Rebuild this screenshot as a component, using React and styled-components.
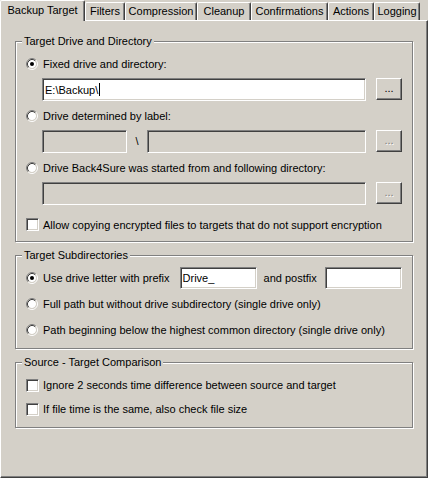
import styled, { createGlobalStyle } from 'styled-components'

const GlobalStyle = createGlobalStyle`
  html, body {
    margin: 0;
    padding: 0;
    background: #d4d0c8;
  }
  body {
    font-family: "Liberation Sans", Arial, sans-serif;
    font-size: 11px;
    color: #000;
  }
`

const Dialog = styled.div`
  width: 428px;
  height: 478px;
  display: flex;
  flex-direction: column;
  background: #d4d0c8;
`

const TabStrip = styled.div`
  display: flex;
  align-items: flex-end;
  height: 20px;
`

const Tab = styled.div`
  box-sizing: border-box;
  position: relative;
  z-index: ${(p) => (p.$active ? 1 : 0)};
  width: ${(p) => p.$w}px;
  height: ${(p) => (p.$active ? 21 : 18)}px;
  margin-bottom: ${(p) => (p.$active ? -1 : 0)}px;
  padding-top: ${(p) => (p.$active ? 3 : 2)}px;
  line-height: 13px;
  text-align: center;
  white-space: nowrap;
  background: #d4d0c8;
  border-top: 1px solid #fff;
  border-left: 1px solid #fff;
  border-right: 1px solid #404040;
  border-radius: 2px 2px 0 0;
  box-shadow: inset -1px 0 #808080;
`

const Page = styled.div`
  flex: 1;
  box-sizing: border-box;
  display: flex;
  flex-direction: column;
  padding: 14px 14px 0 14px;
  border-top: 1px solid #fff;
  border-left: 1px solid #fff;
  border-right: 1px solid #404040;
  border-bottom: 1px solid #404040;
  box-shadow: inset -1px -1px #808080;
`

const Group = styled.fieldset`
  margin: 0 0 7px;
  padding: 0;
  min-width: 0;
  border: 1px solid #808080;
  box-shadow: inset 1px 1px #fff, 1px 1px #fff;
`

const Legend = styled.legend`
  margin-left: 6px;
  padding: 0 2px;
  line-height: 13px;
  background: #d4d0c8;
`

const GroupBody = styled.div`
  display: flex;
  flex-direction: column;
  gap: ${(p) => p.$gap}px;
  padding: ${(p) => p.$pt}px 10px ${(p) => p.$pb}px 10px;
`

const Option = styled.label`
  display: flex;
  align-items: center;
  gap: 4px;
  height: ${(p) => p.$h || 13}px;
  margin-top: ${(p) => p.$mt || 0}px;
  white-space: nowrap;
`

const RadioGlyph = styled.svg`
  flex: none;
  width: 12px;
  height: 12px;
  margin-right: 1px;
`

const CheckBox = styled.span`
  flex: none;
  box-sizing: border-box;
  width: 13px;
  height: 13px;
  background: #fff;
  border: 1px solid;
  border-color: #808080 #fff #fff #808080;
  box-shadow: inset 1px 1px #404040, inset -1px -1px #d4d0c8;
`

const FieldRow = styled.div`
  display: flex;
  align-items: flex-start;
  margin-left: 16px;
`

const Edit = styled.div`
  box-sizing: border-box;
  display: flex;
  align-items: center;
  flex: ${(p) => (p.$w ? 'none' : 1)};
  width: ${(p) => (p.$w ? `${p.$w}px` : 'auto')};
  height: ${(p) => p.$h || 23}px;
  margin-left: ${(p) => (p.$ml === 'auto' ? 'auto' : `${p.$ml || 0}px`)};
  padding: 0 2px;
  white-space: nowrap;
  background: ${(p) => (p.$disabled ? '#d4d0c8' : '#fff')};
  border: 1px solid;
  border-color: #808080 #fff #fff #808080;
  box-shadow: inset 1px 1px #404040, inset -1px -1px #d4d0c8;
`

const Caret = styled.span`
  display: inline-block;
  width: 1px;
  height: 13px;
  margin-left: 1px;
  background: #000;
`

const Separator = styled.span`
  flex: none;
  width: 20px;
  line-height: 23px;
  text-align: center;
`

const Browse = styled.button`
  flex: none;
  box-sizing: border-box;
  width: 26px;
  height: 22px;
  margin: 0 0 0 10px;
  padding: 0 0 2px;
  font: inherit;
  line-height: 13px;
  background: #d4d0c8;
  color: ${(p) => (p.disabled ? '#808080' : '#000')};
  text-shadow: ${(p) => (p.disabled ? '1px 1px #fff' : 'none')};
  border: 1px solid;
  border-color: #fff #404040 #404040 #fff;
  box-shadow: inset -1px -1px #808080;
`

const PrefixRow = styled.div`
  display: flex;
  align-items: center;
  height: 22px;
`

const Caption = styled.span`
  margin-left: 7px;
  white-space: nowrap;
`

const Radio = ({ checked }) => (
  <RadioGlyph viewBox="0 0 12 12">
    <circle cx="6" cy="6" r="4" fill="#fff" />
    <path d="M2.11 9.89A5.5 5.5 0 0 1 9.89 2.11" fill="none" stroke="#808080" />
    <path d="M9.89 2.11A5.5 5.5 0 0 1 2.11 9.89" fill="none" stroke="#fff" />
    <path d="M2.82 9.18A4.5 4.5 0 0 1 9.18 2.82" fill="none" stroke="#404040" />
    <path d="M9.18 2.82A4.5 4.5 0 0 1 2.82 9.18" fill="none" stroke="#d4d0c8" />
    {checked && <circle cx="6" cy="6" r="2" fill="#000" />}
  </RadioGlyph>
)

const tabs = [
  { label: 'Backup Target', w: 85, active: true },
  { label: 'Filters', w: 40 },
  { label: 'Compression', w: 72 },
  { label: 'Cleanup', w: 54 },
  { label: 'Confirmations', w: 77 },
  { label: 'Actions', w: 46 },
  { label: 'Logging', w: 46 },
]

export default function App() {
  return (
    <>
      <GlobalStyle />
      <Dialog>
        <TabStrip>
          {tabs.map((t) => (
            <Tab key={t.label} $w={t.w} $active={t.active}>
              {t.label}
            </Tab>
          ))}
        </TabStrip>
        <Page>
          <Group>
            <Legend>Target Drive and Directory</Legend>
            <GroupBody $gap={8} $pt={9} $pb={10}>
              <Option>
                <Radio checked />
                Fixed drive and directory:
              </Option>
              <FieldRow>
                <Edit>
                  E:\Backup\
                  <Caret />
                </Edit>
                <Browse>...</Browse>
              </FieldRow>
              <Option>
                <Radio />
                Drive determined by label:
              </Option>
              <FieldRow>
                <Edit $w={85} $disabled />
                <Separator>\</Separator>
                <Edit $disabled />
                <Browse disabled>...</Browse>
              </FieldRow>
              <Option>
                <Radio />
                Drive Back4Sure was started from and following directory:
              </Option>
              <FieldRow>
                <Edit $disabled />
                <Browse disabled>...</Browse>
              </FieldRow>
              <Option $mt={5}>
                <CheckBox />
                Allow copying encrypted files to targets that do not support encryption
              </Option>
            </GroupBody>
          </Group>

          <Group>
            <Legend>Target Subdirectories</Legend>
            <GroupBody $gap={4} $pt={5} $pb={7}>
              <PrefixRow>
                <Option $h={22}>
                  <Radio checked />
                  Use drive letter with prefix
                </Option>
                <Edit $w={77} $h={22} $ml={10}>
                  Drive_
                </Edit>
                <Caption>and postfix</Caption>
                <Edit $w={77} $h={22} $ml="auto" />
              </PrefixRow>
              <Option $h={22}>
                <Radio />
                Full path but without drive subdirectory (single drive only)
              </Option>
              <Option $h={22}>
                <Radio />
                Path beginning below the highest common directory (single drive only)
              </Option>
            </GroupBody>
          </Group>

          <Group>
            <Legend>Source - Target Comparison</Legend>
            <GroupBody $gap={8} $pt={8} $pb={10}>
              <Option $h={16}>
                <CheckBox />
                Ignore 2 seconds time difference between source and target
              </Option>
              <Option $h={16}>
                <CheckBox />
                If file time is the same, also check file size
              </Option>
            </GroupBody>
          </Group>
        </Page>
      </Dialog>
    </>
  )
}
